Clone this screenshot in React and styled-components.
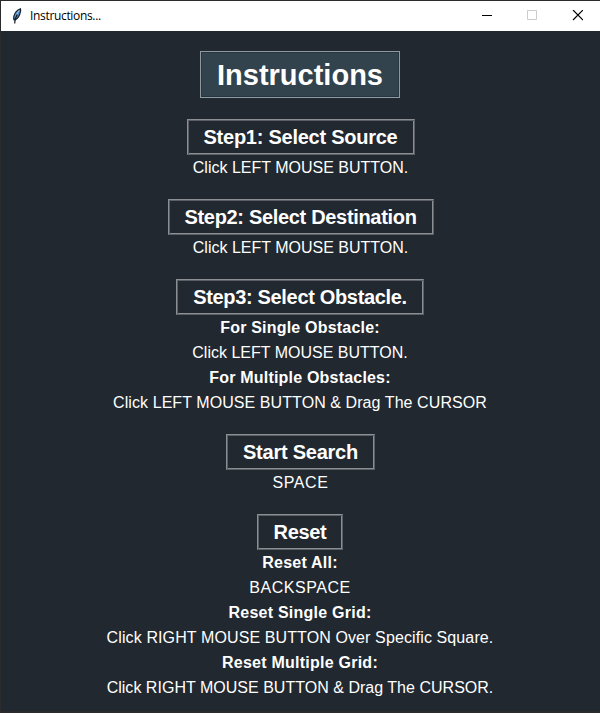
import React from "react";
import styled, { createGlobalStyle } from "styled-components";

const GlobalStyle = createGlobalStyle`
  * { box-sizing: border-box; }
  body { margin: 0; background: #212830; overflow: hidden; }
`;

const Window = styled.main`
  width: 600px;
  height: 713px;
  display: flex;
  flex-direction: column;
  border: solid #2b2b2e;
  border-width: 1px 0 2px 1px;
  background: #212830;
  color: #fff;
  font-family: "Liberation Sans", Arial, sans-serif;
`;

const TitleBar = styled.header`
  flex: none;
  height: 30px;
  display: flex;
  align-items: center;
  background: #fff;
  color: #000;
`;

const FeatherIcon = styled.svg`
  width: 16px;
  height: 16px;
  margin: 0 5px 1px 8px;
  flex: none;
`;

const Caption = styled.span`
  flex: 1;
  font: 12px/16px "Open Sans", sans-serif;
  letter-spacing: -0.33px;
`;

const Control = styled.button`
  width: 45px;
  height: 30px;
  padding: 0 0 1px;
  border: 0;
  background: none;
  display: flex;
  align-items: center;
  justify-content: center;
  color: ${(p) => (p.$disabled ? "#ccc" : "#000")};

  svg { display: block; width: 11px; height: 11px; }
`;

const Content = styled.div`
  flex: 1;
  display: flex;
  flex-direction: column;
  align-items: center;
  padding-top: 20px;
`;

const Title = styled.h1`
  width: 200px;
  height: 47px;
  margin: 0 1px 21px 0;
  border: 1px solid #8f999f;
  box-shadow: inset 0 0 0 1px #263640;
  background: #32434d;
  font-size: 29px;
  line-height: 47px;
  text-align: center;
`;

const Section = styled.section`
  display: flex;
  flex-direction: column;
  align-items: center;
  margin-bottom: 19px;
  padding-right: ${(p) => (p.$even ? 1 : 0)}px;
`;

const Heading = styled.h2`
  width: ${(p) => p.$width}px;
  height: 36px;
  margin: 0;
  border: 1px solid;
  border-color: #8b8e92 #5c6066 #5c6066 #8b8e92;
  box-shadow: inset 1px 1px #5c6066, inset -1px -1px #8b8e92;
  font-size: 20px;
  line-height: 34px;
  letter-spacing: ${(p) => p.$spacing}px;
  text-align: center;
  white-space: nowrap;
`;

const Line = styled.p`
  margin: 0;
  font-size: 16px;
  line-height: 25px;
  font-weight: ${(p) => (p.$bold ? 700 : 400)};
  letter-spacing: ${(p) => p.$spacing || 0}px;
  white-space: nowrap;
`;

const sections = [
  { title: "Step1: Select Source", width: 228, spacing: -0.25, lines: [{ text: "Click LEFT MOUSE BUTTON." }] },
  { title: "Step2: Select Destination", width: 266, spacing: -0.32, lines: [{ text: "Click LEFT MOUSE BUTTON." }] },
  {
    title: "Step3: Select Obstacle.",
    width: 248,
    spacing: -0.33,
    even: true,
    lines: [
      { text: "For Single Obstacle:", bold: true, spacing: 0.2 },
      { text: "Click LEFT MOUSE BUTTON." },
      { text: "For Multiple Obstacles:", bold: true, spacing: 0.2 },
      { text: "Click LEFT MOUSE BUTTON & Drag The CURSOR", spacing: 0.075 },
    ],
  },
  { title: "Start Search", width: 149, spacing: -0.24, lines: [{ text: "SPACE", spacing: 0.55 }] },
  {
    title: "Reset",
    width: 86,
    spacing: -0.3,
    even: true,
    lines: [
      { text: "Reset All:", bold: true, spacing: 0.22 },
      { text: "BACKSPACE", spacing: 0.55 },
      { text: "Reset Single Grid:", bold: true, spacing: 0.24 },
      { text: "Click RIGHT MOUSE BUTTON Over Specific Square.", spacing: 0.11 },
      { text: "Reset Multiple Grid:", bold: true, spacing: 0.24 },
      { text: "Click RIGHT MOUSE BUTTON & Drag The CURSOR.", spacing: 0.02 },
    ],
  },
];

export default function App() {
  return (
    <>
      <GlobalStyle />
      <Window>
        <TitleBar>
          <FeatherIcon viewBox="0 0 16 16">
            <path d="M11.500 .8C8 2.200 5.700 5 4.900 8.100c-.4 1.700-.3 3 .3 3.900 2.400-.6 4.300-2.600 5.400-5.300.9-2.200 1.500-4.200.9-5.900Z" fill="#5590ce" stroke="#17202b" strokeWidth="1.2" />
            <path d="M10 2.500C8.200 5 7 7.500 6.200 11" fill="none" stroke="#a6ceef" strokeWidth="1" />
            <path d="M8.200 6.500 6.200 11l-.5 4.500" fill="none" stroke="#111820" strokeWidth="1.2" />
          </FeatherIcon>
          <Caption>Instructions...</Caption>
          <Control aria-label="Minimize">
            <svg viewBox="0 0 11 11"><path d="M0 5.500h10" stroke="currentColor" /></svg>
          </Control>
          <Control $disabled aria-label="Maximize">
            <svg viewBox="0 0 11 11"><path d="M.5 .5h9v9h-9z" fill="none" stroke="currentColor" /></svg>
          </Control>
          <Control aria-label="Close">
            <svg viewBox="0 0 11 11"><path d="m1 0 10 10m0-10-10 10" stroke="currentColor" strokeWidth="1.2" /></svg>
          </Control>
        </TitleBar>
        <Content>
          <Title>Instructions</Title>
          {sections.map((s) => (
            <Section key={s.title} $even={s.even}>
              <Heading $width={s.width} $spacing={s.spacing}>{s.title}</Heading>
              {s.lines.map((l) => (
                <Line key={l.text} $bold={l.bold} $spacing={l.spacing}>{l.text}</Line>
              ))}
            </Section>
          ))}
        </Content>
      </Window>
    </>
  );
}
